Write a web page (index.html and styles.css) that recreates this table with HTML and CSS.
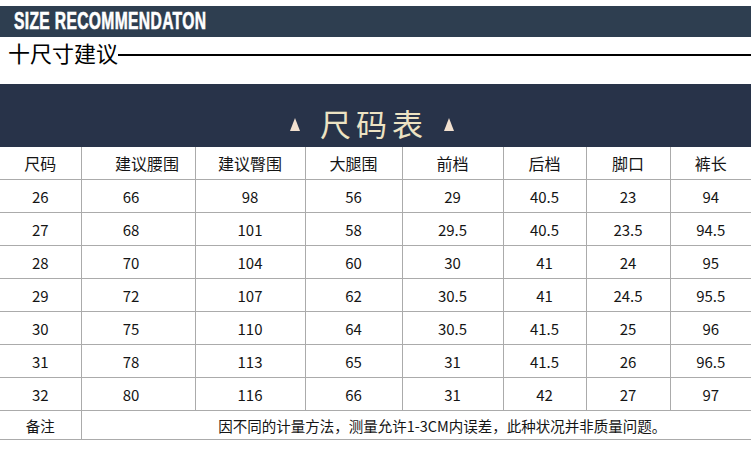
FILE: index.html
```html
<!DOCTYPE html>
<html lang="zh-CN">
<head>
<meta charset="utf-8">
<title>尺码表</title>
<link rel="stylesheet" href="styles.css">
</head>
<body>
<div class="top-bar"><span class="top-title">SIZE RECOMMENDATON</span></div>
<div class="section-title"><span class="section-text">十尺寸建议</span><span class="section-line"></span></div>
<div class="chart-head">
  <span class="tri"></span>
  <span class="chart-title">尺码表</span>
  <span class="tri"></span>
</div>
<table class="size-table">
  <colgroup>
    <col style="width:81px"><col style="width:114px"><col style="width:110px"><col style="width:97px">
    <col style="width:101px"><col style="width:83px"><col style="width:84px"><col style="width:81px">
  </colgroup>
  <thead>
    <tr><th>尺码</th><th class="c2">建议腰围</th><th>建议臀围</th><th>大腿围</th><th>前档</th><th>后档</th><th>脚口</th><th>裤长</th></tr>
  </thead>
  <tbody>
    <tr><td>26</td><td class="c2">66</td><td>98</td><td>56</td><td>29</td><td>40.5</td><td>23</td><td>94</td></tr>
    <tr><td>27</td><td class="c2">68</td><td>101</td><td>58</td><td>29.5</td><td>40.5</td><td>23.5</td><td>94.5</td></tr>
    <tr><td>28</td><td class="c2">70</td><td>104</td><td>60</td><td>30</td><td>41</td><td>24</td><td>95</td></tr>
    <tr><td>29</td><td class="c2">72</td><td>107</td><td>62</td><td>30.5</td><td>41</td><td>24.5</td><td>95.5</td></tr>
    <tr><td>30</td><td class="c2">75</td><td>110</td><td>64</td><td>30.5</td><td>41.5</td><td>25</td><td>96</td></tr>
    <tr><td>31</td><td class="c2">78</td><td>113</td><td>65</td><td>31</td><td>41.5</td><td>26</td><td>96.5</td></tr>
    <tr><td>32</td><td class="c2">80</td><td>116</td><td>66</td><td>31</td><td>42</td><td>27</td><td>97</td></tr>
    <tr class="note-row"><td class="note-label">备注</td><td class="note" colspan="7">因不同的计量方法，测量允许1-3CM内误差，此种状况并非质量问题。</td></tr>
  </tbody>
</table>
</body>
</html>
```

FILE: styles.css
```css
html, body {
  margin: 0;
  padding: 0;
  background: #ffffff;
}
body {
  width: 751px;
  font-family: "Noto Sans CJK SC", "Liberation Sans", sans-serif;
  color: #151515;
}
.top-bar {
  margin-top: 6px;
  height: 31px;
  background: #2e3e50;
  display: flex;
  align-items: center;
  padding-left: 14px;
}
.top-title {
  display: inline-block;
  font-family: "Liberation Sans", "DejaVu Sans", sans-serif;
  font-weight: bold;
  font-size: 23px;
  letter-spacing: 0.5px;
  color: #ffffff;
  line-height: 1;
  transform: scaleX(0.68);
  transform-origin: left center;
  -webkit-text-stroke: 0.6px #ffffff;
}
.section-title {
  height: 47px;
  display: flex;
  align-items: flex-start;
  padding-left: 8px;
}
.section-text {
  font-size: 22px;
  line-height: 30px;
  color: #000;
}
.section-line {
  flex: 1;
  height: 2px;
  margin-top: 17px;
  background: #000;
}
.chart-head {
  height: 49px;
  padding-top: 14px;
  padding-right: 7px;
  background: #283349;
  display: flex;
  align-items: center;
  justify-content: center;
  gap: 20px;
}
.chart-title {
  font-size: 31px;
  line-height: 40px;
  letter-spacing: 5px;
  margin-right: -4px;
  color: #ede3c3;
}
.tri {
  width: 0;
  height: 0;
  border-left: 5px solid transparent;
  border-right: 5px solid transparent;
  border-bottom: 13px solid #f2e0cf;
  margin-top: 4px;
}
.size-table {
  width: 751px;
  table-layout: fixed;
  border-collapse: collapse;
}
.size-table th,
.size-table td {
  border: 1px solid #ababab;
  text-align: center;
  padding: 0;
  height: 32px;
  font-weight: normal;
}
.size-table th {
  font-size: 16px;
  border-top: none;
}
.size-table td {
  font-size: 15px;
}
.size-table th:first-child,
.size-table td:first-child {
  border-left: none;
}
.size-table th:last-child,
.size-table td:last-child {
  border-right: none;
}
.size-table th.c2 {
  padding-left: 18px;
}
.size-table td.c2 {
  padding-right: 14px;
}
.note-row td {
  height: 28px;
  font-size: 14.5px;
}
.size-table td.note {
  padding-left: 52px;
}
```
